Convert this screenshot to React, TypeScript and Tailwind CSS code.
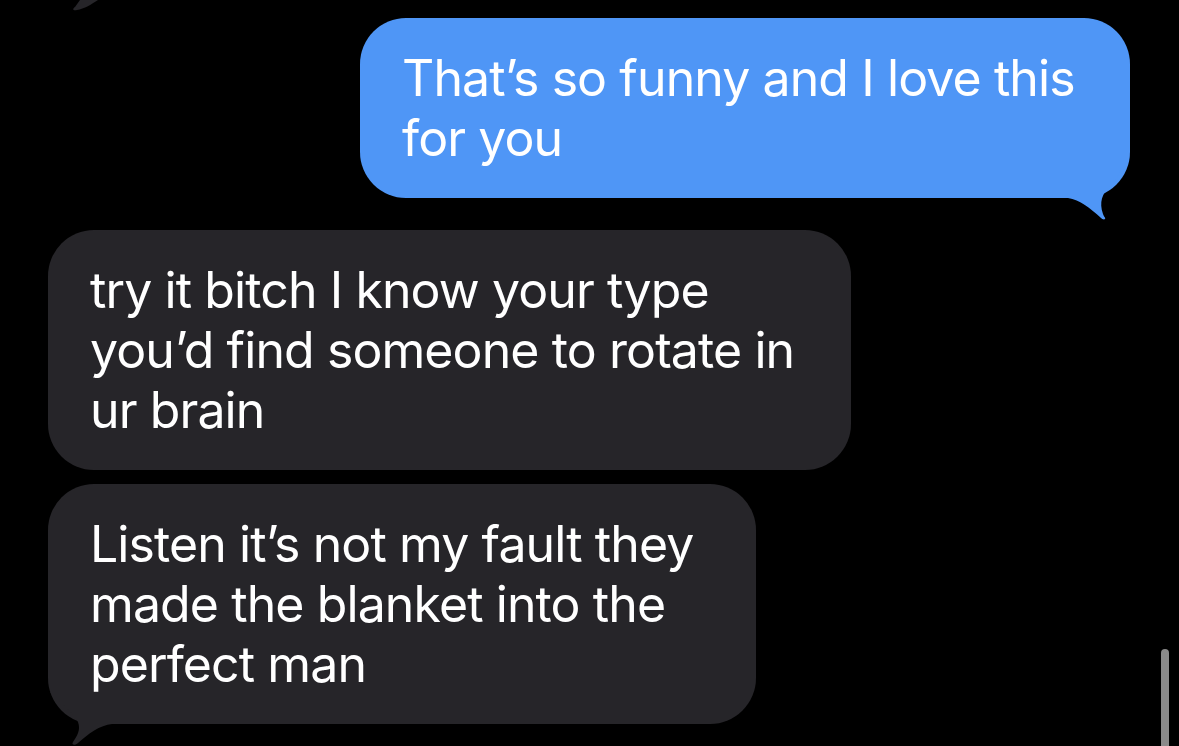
const font = { fontFamily: 'Inter, "Noto Sans", sans-serif' };

function Bubble({
  lines,
  from,
  width,
  tail,
}: {
  lines: string[];
  from: 'me' | 'them';
  width: string;
  tail?: boolean;
}) {
  const me = from === 'me';
  return (
    <div className={`relative ${width} rounded-[46px] py-[30px] pl-[42px] pr-[30px] text-[50px] leading-[60px] tracking-[-0.9px] text-white ${me ? 'bg-[#4f96f6]' : 'bg-[#262529]'}`}>
      {lines.map((l, i) => (
        <div key={i} className="whitespace-nowrap">
          {l}
        </div>
      ))}
      {tail && me && (
        <svg className="absolute right-0 bottom-[-22px]" width="70" height="50" viewBox="0 0 70 50">
          <path d="M0 0 H60 C58 8 54 12 50 16 C42 24 39 32 43 44 C44 47 46 48 45 49 C44 50 42 49 41 48 C30 38 20 30 8 28 H0 Z" fill="#4f96f6" />
        </svg>
      )}
      {tail && !me && (
        <svg className="absolute left-[-8px] bottom-[-22px]" width="80" height="54" viewBox="0 0 80 54">
          <path d="M10 0 H60 V32 H72 C60 33 48 42 38 51 C35 54 31 53 33 50 C37 44 41 38 38 30 C34 22 24 14 10 0 Z" fill="#262529" />
        </svg>
      )}
    </div>
  );
}

export default function App() {
  return (
    <div className="relative h-[746px] w-[1179px] overflow-hidden bg-black" style={font}>
      {/* tail of the previous bubble, cut off at the top */}
      <svg className="absolute left-[70px] top-0" width="32" height="14" viewBox="0 0 32 14">
        <path d="M10 0 H28 C22 4 14 9 7 10 C3 11 2 9 5 7 Z" fill="#262529" />
      </svg>

      <div className="flex flex-col px-[48px] pt-[18px]">
        <div className="flex justify-end pr-px">
          <Bubble from="me" width="w-[770px]" lines={['That’s so funny and I love this', 'for you']} tail />
        </div>

        <div className="mt-[32px] flex flex-col items-start gap-[14px]">
          <Bubble
            from="them"
            width="w-[803px]"
            lines={['try it bitch I know your type', 'you’d find someone to rotate in', 'ur brain']}
          />
          <Bubble
            from="them"
            width="w-[708px]"
            lines={['Listen it’s not my fault they', 'made the blanket into the', 'perfect man']}
            tail
          />
        </div>
      </div>

      {/* scroll indicator */}
      <div className="absolute left-[1161px] top-[649px] h-[110px] w-[8px] rounded-full bg-[#8a8a8a]" />
    </div>
  );
}
